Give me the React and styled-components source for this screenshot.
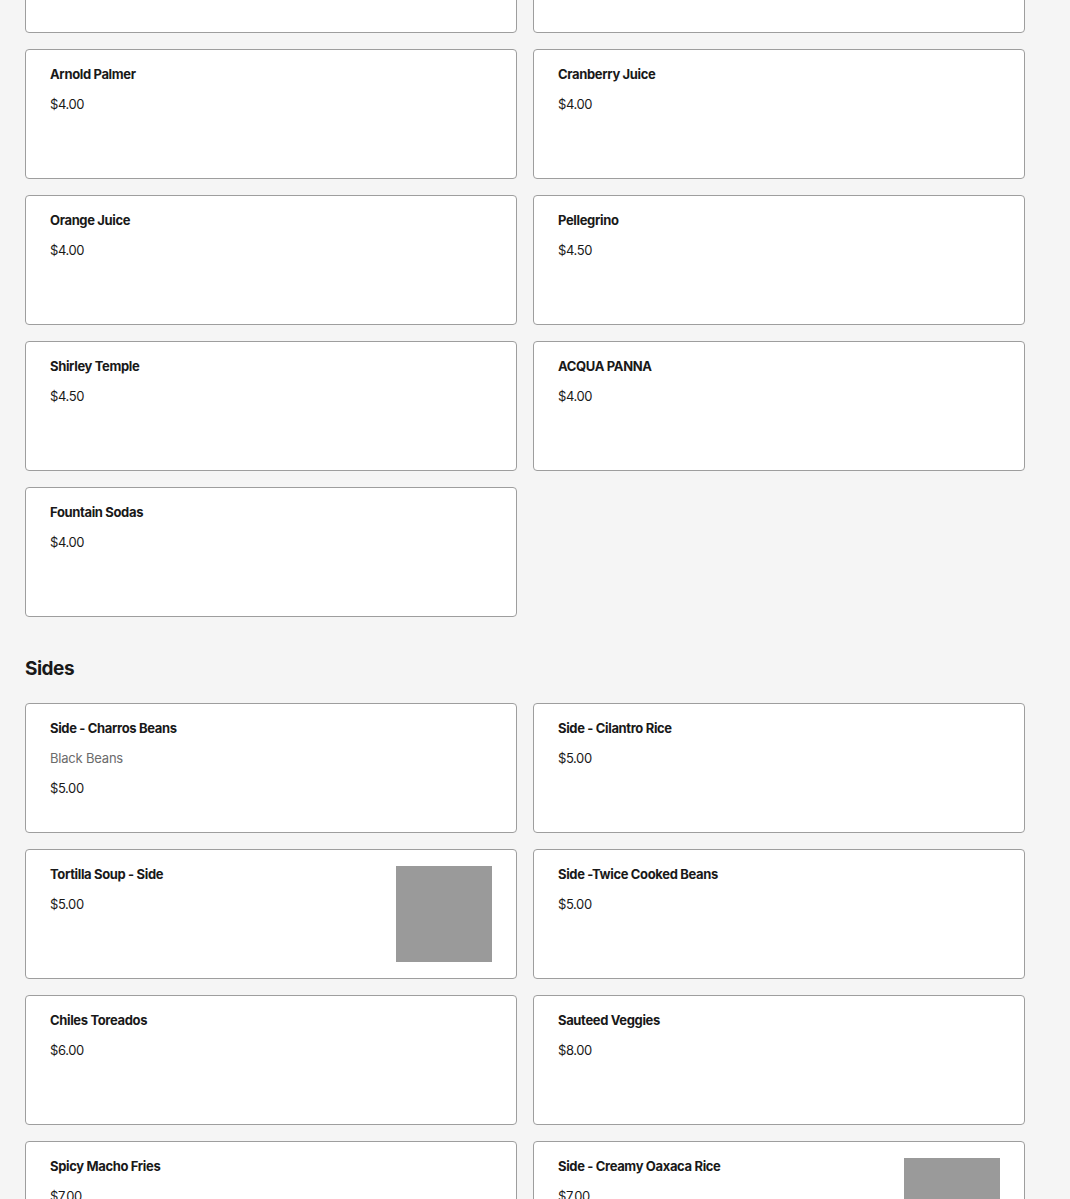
import React from "react";
import styled, { createGlobalStyle } from "styled-components";

const Global = createGlobalStyle`
  html, body {
    margin: 0;
    padding: 0;
    background: #f5f5f5;
  }
  body {
    font-family: Inter, "Noto Sans", "Liberation Sans", sans-serif;
    color: #191919;
    overflow: hidden;
  }
`;

const Viewport = styled.div`
  height: 1199px;
  overflow: hidden;
`;

/* the list is scrolled: the first row of cards sits partly above the fold */
const Page = styled.main`
  margin-top: -97px;
  padding: 0 45px 0 25px;
  display: flex;
  flex-direction: column;
  gap: 40px;
  width: 1000px;
`;

const Section = styled.section`
  display: flex;
  flex-direction: column;
  gap: 22px;
`;

const Heading = styled.h2`
  margin: 0;
  font-size: 19px;
  line-height: 24px;
  font-weight: 700;
  letter-spacing: -0.5px;
  color: #191919;
`;

const Grid = styled.div`
  display: grid;
  grid-template-columns: repeat(2, 492px);
  gap: 16px;
`;

const Card = styled.article`
  box-sizing: border-box;
  background: #fff;
  border: 1px solid #9e9e9e;
  border-radius: 4px;
  padding: 16px 24px;
  min-height: 130px;
  display: flex;
  justify-content: space-between;
  align-items: flex-start;
`;

const Info = styled.div`
  display: flex;
  flex-direction: column;
  gap: 14px;
`;

const Title = styled.h3`
  margin: 0;
  font-size: 13px;
  line-height: 16px;
  font-weight: 700;
  letter-spacing: -0.35px;
  color: #191919;
`;

const Desc = styled.p`
  margin: 0;
  font-size: 13px;
  line-height: 16px;
  font-weight: 400;
  letter-spacing: -0.2px;
  color: #6b6b6b;
`;

const Price = styled.span`
  font-size: 13px;
  line-height: 16px;
  font-weight: 400;
  letter-spacing: -0.4px;
  color: #191919;
`;

const Thumb = styled.div`
  width: 96px;
  height: 96px;
  flex-shrink: 0;
  margin-left: 16px;
  background: #9a9a9a;
`;

const drinks = [
  { id: "a" },
  { id: "b" },
  { name: "Arnold Palmer", price: "$4.00" },
  { name: "Cranberry Juice", price: "$4.00" },
  { name: "Orange Juice", price: "$4.00" },
  { name: "Pellegrino", price: "$4.50" },
  { name: "Shirley Temple", price: "$4.50" },
  { name: "ACQUA PANNA", price: "$4.00" },
  { name: "Fountain Sodas", price: "$4.00" },
];

const sides = [
  { name: "Side - Charros Beans", desc: "Black Beans", price: "$5.00" },
  { name: "Side - Cilantro Rice", price: "$5.00" },
  { name: "Tortilla Soup - Side", price: "$5.00", img: true },
  { name: "Side -Twice Cooked Beans", price: "$5.00" },
  { name: "Chiles Toreados", price: "$6.00" },
  { name: "Sauteed Veggies", price: "$8.00" },
  { name: "Spicy Macho Fries", price: "$7.00" },
  { name: "Side - Creamy Oaxaca Rice", price: "$7.00", img: true },
];

function Item({ item }) {
  return (
    <Card>
      {item.name && (
        <Info>
          <Title>{item.name}</Title>
          {item.desc && <Desc>{item.desc}</Desc>}
          <Price>{item.price}</Price>
        </Info>
      )}
      {item.img && <Thumb />}
    </Card>
  );
}

export default function App() {
  return (
    <Viewport>
      <Global />
      <Page>
        <Section>
          <Grid>
            {drinks.map((d) => (
              <Item key={d.name || d.id} item={d} />
            ))}
          </Grid>
        </Section>
        <Section>
          <Heading>Sides</Heading>
          <Grid>
            {sides.map((d) => (
              <Item key={d.name} item={d} />
            ))}
          </Grid>
        </Section>
      </Page>
    </Viewport>
  );
}
